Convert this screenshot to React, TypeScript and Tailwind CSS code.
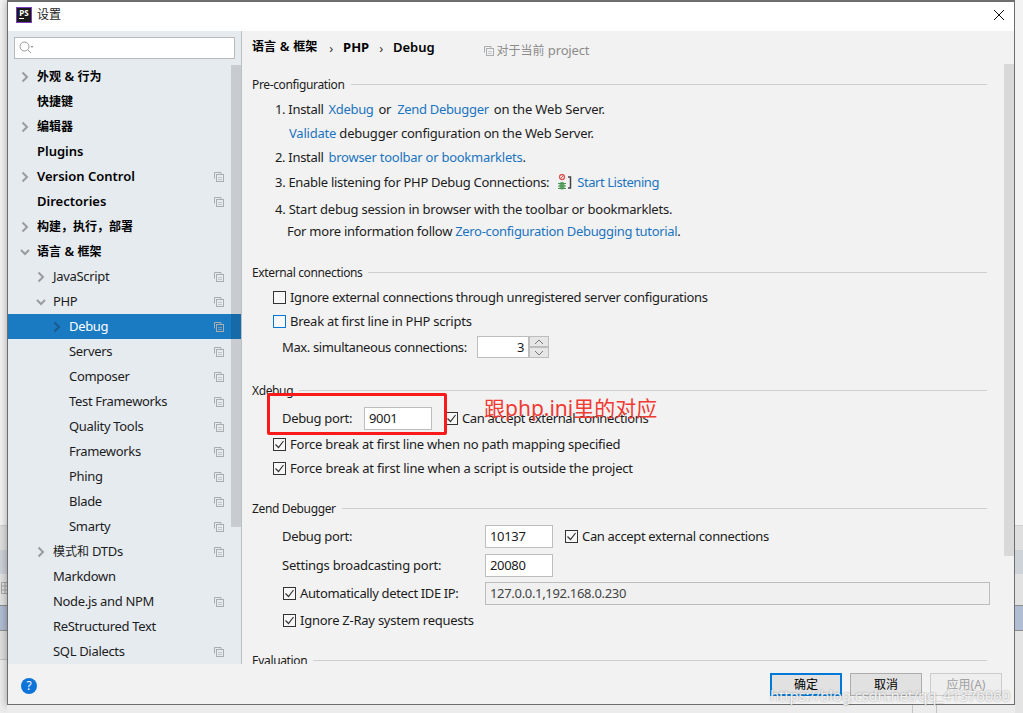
import React from "react";

const Copy = ({ className = "" }: { className?: string }) => (
  <svg width="10" height="10" viewBox="0 0 10 10" className={className} fill="none" stroke="#a9adb0" strokeWidth="1">
    <path d="M.5 6.500v-6h6.500v2" />
    <rect x="2.500" y="2.500" width="7" height="7" />
    <path d="M4 5.500h4M4 7.500h4" strokeWidth="1" opacity=".6" />
  </svg>
);

const Chevron = ({ open, color = "#9a9c9e" }: { open?: boolean; color?: string }) => (
  <svg width="10" height="12" viewBox="0 0 10 12" fill="none" stroke={color} strokeWidth="2" className="ml-[3px] shrink-0">
    {open ? <path d="M1 4l4 4 4-4" /> : <path d="M2.500 1.500L7 6l-4.500 4.500" />}
  </svg>
);

const cjk = /[\u4e00-\u9fff，]/;

// CJK runs in the reference are 12px wide per glyph while Latin stays 13px
const Mixed = ({ text }: { text: string }) => (
  <>
    {text.split(/([\u4e00-\u9fff，]+)/).map((p, i) =>
      cjk.test(p) ? (
        <span key={i} className="text-[12px] tracking-normal">{p}</span>
      ) : (
        <span key={i}>{p}</span>
      )
    )}
  </>
);

type Item = { t: string; lvl: 0 | 1 | 2; ch?: "r" | "d"; copy?: boolean; sel?: boolean };

const items: Item[] = [
  { t: "外观 & 行为", lvl: 0, ch: "r" },
  { t: "快捷键", lvl: 0 },
  { t: "编辑器", lvl: 0, ch: "r" },
  { t: "Plugins", lvl: 0 },
  { t: "Version Control", lvl: 0, ch: "r", copy: true },
  { t: "Directories", lvl: 0, copy: true },
  { t: "构建，执行，部署", lvl: 0, ch: "r" },
  { t: "语言 & 框架", lvl: 0, ch: "d" },
  { t: "JavaScript", lvl: 1, ch: "r", copy: true },
  { t: "PHP", lvl: 1, ch: "d", copy: true },
  { t: "Debug", lvl: 2, ch: "r", copy: true, sel: true },
  { t: "Servers", lvl: 2, copy: true },
  { t: "Composer", lvl: 2, copy: true },
  { t: "Test Frameworks", lvl: 2, copy: true },
  { t: "Quality Tools", lvl: 2, copy: true },
  { t: "Frameworks", lvl: 2, copy: true },
  { t: "Phing", lvl: 2, copy: true },
  { t: "Blade", lvl: 2, copy: true },
  { t: "Smarty", lvl: 2, copy: true },
  { t: "模式和 DTDs", lvl: 1, ch: "r", copy: true },
  { t: "Markdown", lvl: 1 },
  { t: "Node.js and NPM", lvl: 1, copy: true },
  { t: "ReStructured Text", lvl: 1 },
  { t: "SQL Dialects", lvl: 1, copy: true },
];

const indent = { 0: "pl-[9px]", 1: "pl-[25px]", 2: "pl-[41px]" };

const TreeRow = ({ it }: { it: Item }) => (
  <div className={`flex h-[25px] items-center pr-[17px] ${indent[it.lvl]} ${it.sel ? "bg-[#1a7ac2] text-white" : "text-[#1c1c1c]"}`}>
    <span className="flex w-[20px] shrink-0">
      {it.ch && <Chevron open={it.ch === "d"} color={it.sel ? "#1d5a8f" : "#9a9c9e"} />}
    </span>
    <span className={`flex-1 whitespace-nowrap ${cjk.test(it.t) ? "" : "pb-[2px]"} ${it.lvl === 0 ? "font-semibold tracking-normal text-black" : ""}`}>
      <Mixed text={it.t} />
    </span>
    {it.copy && <Copy />}
  </div>
);

const Link = ({ children, className = "" }: { children: React.ReactNode; className?: string }) => (
  <span className={`text-[#1b74c0] ${className}`}>{children}</span>
);

const Section = ({ title, className = "" }: { title: string; className?: string }) => (
  <div className={`flex h-5 items-center gap-[6px] text-[12px] tracking-[-0.36px] ${className}`}>
    <span className="whitespace-nowrap pt-[2px]">{title}</span>
    <span className="h-px flex-1 bg-[#cfcfcf]" />
  </div>
);

const Check = ({ on, focus }: { on?: boolean; focus?: boolean }) => (
  <span className={`inline-flex h-[13px] w-[13px] shrink-0 items-center justify-center border bg-[#f7f7f7] ${focus ? "border-[#0078d7]" : "border-[#333333]"}`}>
    {on && (
      <svg width="11" height="11" viewBox="0 0 11 11" fill="none" stroke="#333" strokeWidth="1.200">
        <path d="M1.500 5.500l3 3 5-6.500" />
      </svg>
    )}
  </span>
);

const CheckRow = ({ label, on, focus, className = "" }: { label: string; on?: boolean; focus?: boolean; className?: string }) => (
  <div className={`flex h-5 items-center gap-[4px] whitespace-nowrap ${className}`}>
    <Check on={on} focus={focus} />
    <span>{label}</span>
  </div>
);

const Field = ({ v, className = "" }: { v: string; className?: string }) => (
  <span className={`flex h-[23px] items-center border border-[#bdbdbd] bg-white pl-[4px] ${className}`}>{v}</span>
);

const BugIcon = () => (
  <svg width="15" height="17" viewBox="0 0 15 17" fill="none" className="shrink-0">
    <circle cx="5" cy="3" r="2.500" stroke="#d9534f" strokeWidth="1.300" />
    <path d="M3.500 4.500l3-3" stroke="#d9534f" />
    <rect x="2.500" y="8" width="5" height="7.500" rx="2" fill="#5fa866" />
    <path d="M1 9.500h8M1 12h8M1 14.500h8" stroke="#4c9455" />
    <path d="M11 3h2.500v11H11" stroke="#444" strokeWidth="1.500" />
  </svg>
);

const SpinBtn = ({ d, className = "" }: { d: string; className?: string }) => (
  <span className={`flex h-[11px] w-[20px] items-center justify-center border border-[#bdbdbd] bg-[#e6e6e6] ${className}`}>
    <svg width="10" height="6" viewBox="0 0 10 6" fill="none" stroke="#777"><path d={d} /></svg>
  </span>
);

const Btn = ({ t, className }: { t: string; className: string }) => (
  <span className={`flex h-[23px] w-[72px] items-center justify-center text-[12px] tracking-normal ${className}`}>{t}</span>
);

export default function App() {
  return (
    <div className="relative flex h-[713px] w-[1023px] overflow-hidden bg-[#f2f2f2] text-[13px] leading-5 tracking-[-0.32px] text-[#1c1c1c] font-['Noto_Sans','Noto_Sans_CJK_SC',sans-serif]">
      {/* window behind the dialog, left edge */}
      <div className="flex w-[7px] shrink-0 flex-col">
        <div className="h-[525px] bg-[#f3f3f3]" />
        <div className="h-[25px] border-t border-[#cfcfcf] bg-[#dfdfdf]" />
        <div className="h-[24px] bg-[#ced2d9]" />
        <div className="h-[31px] overflow-hidden bg-[#e2e2e2] pt-[8px]">
          <svg width="8" height="12" viewBox="0 0 8 12" fill="none" stroke="#a5a5a5"><path d="M1.500 .5h8v11h-8zM1.500 4h8M1.500 8h8M5 .5v11" /></svg>
        </div>
        <div className="h-[26px] border-y border-[#8c8c8c] bg-[#b1bdd2]" />
        <div className="h-[28px] bg-[#dedede]" />
        <div className="flex-1 border-t border-[#c4c4c4] bg-[#ececec]" />
      </div>

      {/* dialog column */}
      <div className="flex w-[1008px] shrink-0 flex-col">
        <div className="flex h-[705px] flex-col border border-t-2 border-[#6e6e6e] shadow-[0_1px_8px_rgba(0,0,0,0.35)]">
          {/* title bar */}
          <div className="flex h-[29px] shrink-0 items-center bg-white pb-[3px] pl-[8px] pr-[9px]">
            <span className="flex h-4 w-4 flex-col items-center border border-[#7a3fc0] bg-[#1a1a1a] text-white">
              <span className="text-[8px] font-bold leading-[9px] tracking-normal">PS</span>
              <span className="ml-[-5px] mt-px h-px w-[5px] bg-white" />
            </span>
            <span className="ml-[5px] flex-1 text-[12px] tracking-normal">设置</span>
            <svg width="12" height="12" viewBox="0 0 12 12" stroke="#111" strokeWidth="1" fill="none"><path d="M1 1l10 10M11 1L1 11" /></svg>
          </div>

          {/* body */}
          <div className="flex h-[633px] shrink-0">
            {/* sidebar */}
            <div className="relative w-[234px] shrink-0 overflow-hidden border-r border-[#bcc0c4] bg-[#e6ebf0]">
              <div className="flex h-[33px] items-center px-[6px]">
                <div className="flex h-[22px] w-[221px] items-center gap-px border border-[#b9b9b9] bg-white pl-[4px]">
                  <svg width="15" height="13" viewBox="0 0 15 13" fill="none" stroke="#9a9a9a"><circle cx="5.500" cy="5.500" r="4.500" /><path d="M9 9l3 3" /><path d="M11.500 5h3l-1.500 2z" fill="#9a9a9a" stroke="none" /></svg>
                </div>
              </div>
              {items.map((it) => <TreeRow key={it.t} it={it} />)}
              <div className="absolute right-0 top-[34px] h-[462px] w-[10px] bg-black/[0.13]" />
            </div>

            {/* right pane */}
            <div className="relative min-w-0 flex-1 overflow-hidden bg-[#f2f2f2]">
              <div className="flex h-[33px] items-center pl-[10px]">
                <span className="pb-[2px] font-semibold tracking-[0.3px] text-black"><Mixed text="语言 & 框架" /></span>
                <span className="ml-[12px] text-[#333]">›</span>
                <span className="ml-[10px] pb-[2px] font-bold tracking-normal text-black">PHP</span>
                <span className="ml-[10px] text-[#333]">›</span>
                <span className="ml-[10px] pb-[2px] font-semibold tracking-normal text-black">Debug</span>
                <Copy className="ml-[49px] mt-[6px]" />
                <span className="ml-[3px] mt-[6px] tracking-[-0.15px] text-[#8c8c8c]"><Mixed text="对于当前 project" /></span>
              </div>

              <div className="pl-[10px] pr-[27px] pt-[10px]">
                <Section title="Pre-configuration" />
                <div className="mt-[5px] flex h-5 items-center pl-[23px] whitespace-pre">
                  <span>1. Install</span>
                  <Link className="ml-[5px]">Xdebug</Link>
                  <span className="ml-[5px]">or</span>
                  <Link className="ml-[6px]">Zend Debugger</Link>
                  <span className="ml-[5px] tracking-[-0.15px]">on the Web Server.</span>
                </div>
                <div className="mt-1 flex h-5 items-center pl-[37px] whitespace-pre tracking-[-0.21px]"><Link>Validate</Link> debugger configuration on the Web Server.</div>
                <div className="mt-1 flex h-5 items-center pl-[23px] whitespace-pre">
                  <span>2. Install</span>
                  <Link className="ml-[5px] tracking-[-0.25px]">browser toolbar or bookmarklets</Link>.
                </div>
                <div className="mt-[5px] flex h-5 items-center pl-[23px] whitespace-pre tracking-[-0.3px]">3. Enable listening for PHP Debug Connections:<span className="ml-[8px]"><BugIcon /></span><Link className="ml-[5px] tracking-[-0.45px]">Start Listening</Link></div>
                <div className="mt-[7px] flex h-5 items-center pl-[23px] whitespace-pre tracking-[-0.21px]">4. Start debug session in browser with the toolbar or bookmarklets.</div>
                <div className="mt-[2px] flex h-5 items-center pl-[35px] whitespace-pre">
                  <span className="tracking-[-0.25px]">For more information follow</span>
                  <Link className="ml-[3px]">Zero-configuration Debugging tutorial</Link>.
                </div>

                <Section title="External connections" className="mt-[21px]" />
                <CheckRow className="mt-[5px] pl-[21px]" label="Ignore external connections through unregistered server configurations" />
                <CheckRow className="mt-1 pl-[21px] tracking-[-0.26px]" focus label="Break at first line in PHP scripts" />
                <div className="mt-[6px] flex h-5 items-center pl-[30px]">
                  <span className="w-[195px] whitespace-nowrap tracking-[-0.38px]">Max. simultaneous connections:</span>
                  <span className="flex h-[22px] w-[52px] items-center justify-end border border-[#bdbdbd] bg-white pr-[4px]">3</span>
                  <span className="flex flex-col">
                    <SpinBtn d="M1 5l4-4 4 4" />
                    <SpinBtn d="M1 1l4 4 4-4" />
                  </span>
                </div>

                <Section title="Xdebug" className="mt-[23px]" />
                <div className="mt-2 flex h-5 items-center pl-[30px] whitespace-nowrap">
                  <span className="w-[82px]">Debug port:</span>
                  <Field v="9001" className="w-[68px]" />
                  <span className="ml-[13px] tracking-[-0.36px]"><CheckRow on label="Can accept external connections" /></span>
                </div>
                <CheckRow on className="mt-[6px] pl-[21px] tracking-[-0.23px]" label="Force break at first line when no path mapping specified" />
                <CheckRow on className="mt-1 pl-[21px] tracking-[-0.21px]" label="Force break at first line when a script is outside the project" />

                <Section title="Zend Debugger" className="mt-5" />
                <div className="mt-2 flex h-5 items-center pl-[30px] whitespace-nowrap">
                  <span className="w-[203px]">Debug port:</span>
                  <Field v="10137" className="w-[68px]" />
                  <span className="ml-[12px] tracking-[-0.34px]"><CheckRow on label="Can accept external connections" /></span>
                </div>
                <div className="mt-[9px] flex h-5 items-center pl-[30px] whitespace-nowrap">
                  <span className="w-[203px] tracking-[-0.24px]">Settings broadcasting port:</span>
                  <Field v="20080" className="w-[68px]" />
                </div>
                <div className="mt-2 flex h-5 items-center pl-[31px] whitespace-nowrap">
                  <span className="w-[202px] tracking-[-0.36px]"><CheckRow on label="Automatically detect IDE IP:" /></span>
                  <span className="mr-[-3px] flex h-[23px] flex-1 items-center border border-[#bdbdbd] bg-[#f0f0f0] pl-[4px] text-[#444]">127.0.0.1,192.168.0.230</span>
                </div>
                <CheckRow on className="mt-[7px] pl-[31px] tracking-[-0.25px]" label="Ignore Z-Ray system requests" />
                <Section title="Evaluation" className="mt-5" />
              </div>

              <div className="absolute right-0 top-[33px] h-[492px] w-[10px] bg-[#d9d9d9]" />
            </div>
          </div>

          {/* footer */}
          <div className="flex flex-1 items-center bg-[#f2f2f2] pl-[13px] pr-[12px] pt-[1px]">
            <span className="mt-[2px] flex h-4 w-4 items-center justify-center rounded-full bg-[#0f74d8] text-[12px] leading-none text-white">?</span>
            <span className="flex-1" />
            <Btn t="确定" className="border-2 border-[#0078d7] bg-[#e1e1e1] text-black" />
            <Btn t="取消" className="ml-[8px] border border-[#adadad] bg-[#e1e1e1] text-black" />
            <Btn t="应用(A)" className="ml-[8px] border border-[#cccccc] bg-[#eeeeee] text-[#a0a0a0]" />
          </div>
        </div>
        {/* what shows below the dialog */}
        <div className="flex h-[8px] bg-[#ececec] pl-[905px]">
          <span className="w-[25px] border-x border-[#c4c4c4]" />
        </div>
      </div>

      {/* window behind the dialog, right edge */}
      <div className="flex flex-1 flex-col">
        <div className="h-[525px] bg-[#f3f3f3]" />
        <div className="h-[25px] border-t border-[#cfcfcf] bg-[#dfdfdf]" />
        <div className="h-[24px] bg-[#ced2d9]" />
        <div className="h-[31px] bg-[#e2e2e2]" />
        <div className="h-[26px] border-y border-[#8c8c8c] bg-[#b1bdd2]" />
        <div className="flex-1 bg-[#e4e4e4]" />
      </div>

      {/* annotation painted over the screenshot */}
      <div className="pointer-events-none absolute left-[267px] top-[393px] h-[42px] w-[180px] rounded-[2px] border-[3px] border-[#fb1a1a]" />
      <div className="pointer-events-none absolute left-[484px] top-[394px] whitespace-nowrap text-[21px] leading-7 tracking-normal text-[#f03a32]">跟php.ini里的对应</div>

      {/* watermark */}
      <div className="pointer-events-none absolute left-[770px] top-[683px] whitespace-nowrap text-[15px] leading-6 tracking-[-0.2px] text-white/85 [text-shadow:0_0_2px_rgba(90,90,90,0.7)]">https://blog.csdn.net/qq_41376060</div>
    </div>
  );
}
